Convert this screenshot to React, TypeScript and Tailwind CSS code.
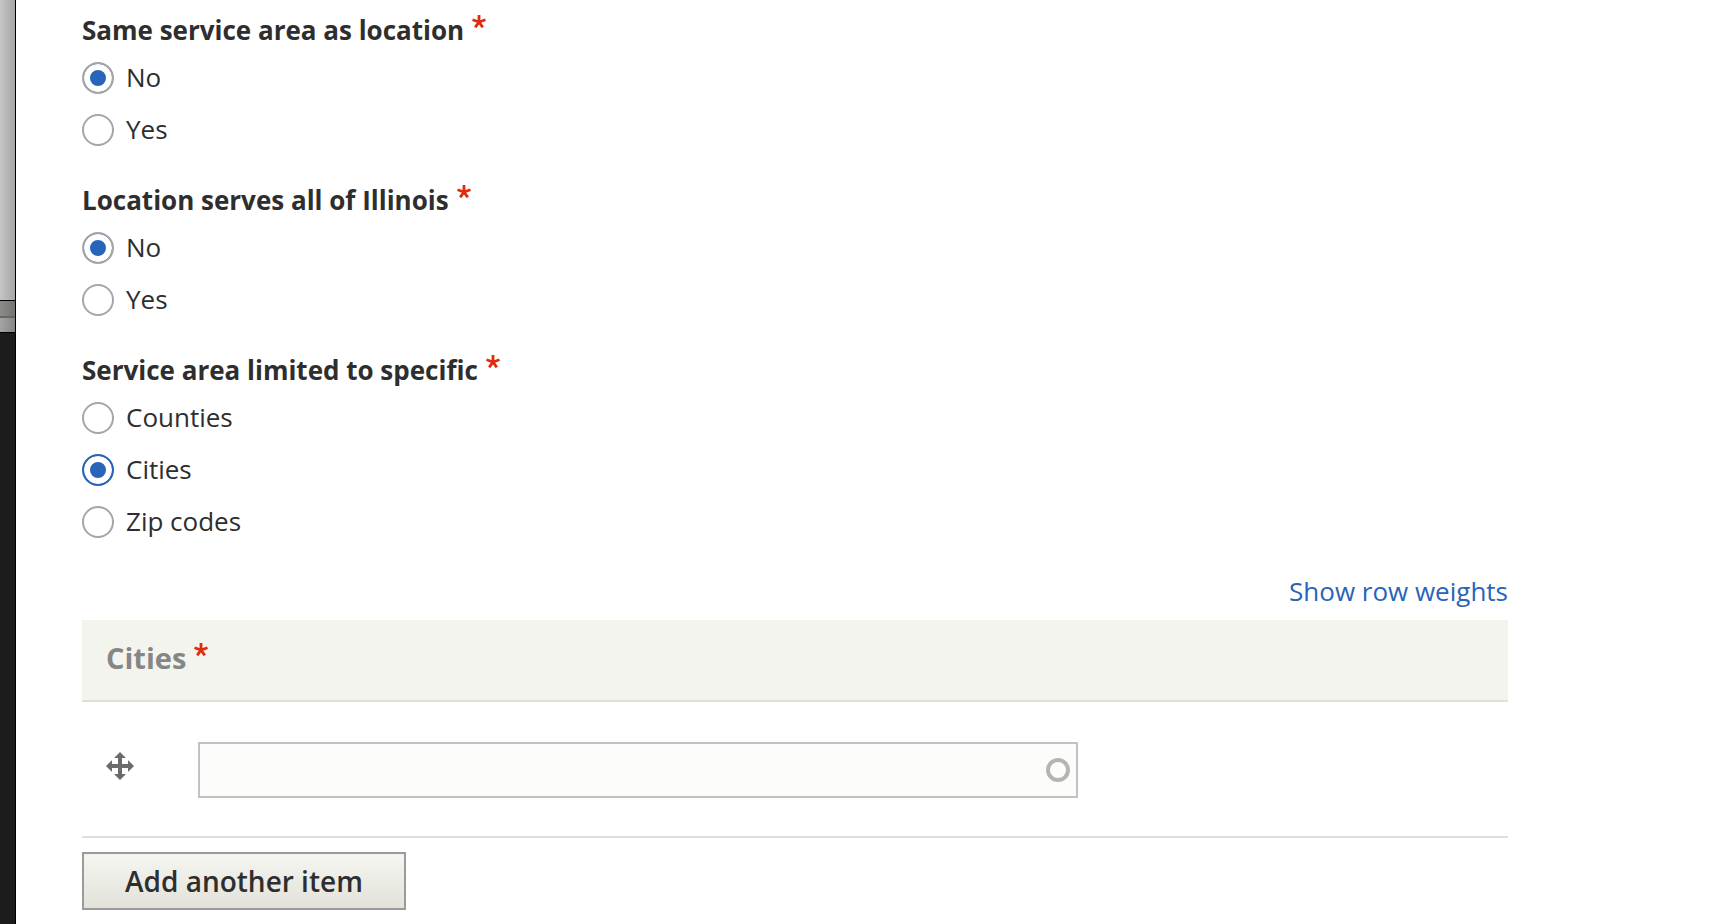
import { useState } from 'react';

interface RadioOption {
  value: string;
  label: string;
}

interface RadioGroupProps {
  name: string;
  legend: string;
  options: RadioOption[];
  value: string;
  active?: boolean;
  onChange: (value: string) => void;
}

const yesNo: RadioOption[] = [
  { value: 'no', label: 'No' },
  { value: 'yes', label: 'Yes' },
];

const areaTypes: RadioOption[] = [
  { value: 'counties', label: 'Counties' },
  { value: 'cities', label: 'Cities' },
  { value: 'zip', label: 'Zip codes' },
];

function RequiredMark() {
  return (
    <svg viewBox="0 0 14 13" className="ml-2 inline-block h-[13px] w-[14px] -translate-y-3" aria-hidden="true">
      <path
        d="M7 7V0M7 7L.5 4.700M7 7l6.500-2.300M7 7l-3.800 5.400M7 7l3.800 5.400"
        stroke="#e02b0c"
        strokeWidth="2.8"
        fill="none"
      />
    </svg>
  );
}

function RadioGroup({ name, legend, options, value, active, onChange }: RadioGroupProps) {
  return (
    <fieldset>
      <legend className="pb-0.5 text-[26px] leading-10 font-bold">
        {legend}
        <RequiredMark />
      </legend>
      {options.map((option) => (
        <div key={option.value} className="flex h-[52px] items-center gap-3">
          <input
            type="radio"
            id={`${name}-${option.value}`}
            name={name}
            checked={value === option.value}
            onChange={() => onChange(option.value)}
            className={`h-8 w-8 shrink-0 appearance-none rounded-full border-2 bg-white checked:bg-[#2864b8] checked:shadow-[inset_0_0_0_6px_#fff] ${
              active && value === option.value ? 'border-[#2864b8]' : 'border-[#a6a6a6]'
            }`}
          />
          <label htmlFor={`${name}-${option.value}`} className="pb-0.5 text-[26px] leading-8">
            {option.label}
          </label>
        </div>
      ))}
    </fieldset>
  );
}

export default function App() {
  const [sameArea, setSameArea] = useState('no');
  const [allIllinois, setAllIllinois] = useState('no');
  const [areaType, setAreaType] = useState('cities');
  const [rows, setRows] = useState<string[]>(['']);

  const updateRow = (index: number, text: string) => {
    setRows((prev) => prev.map((row, i) => (i === index ? text : row)));
  };

  return (
    <div className="flex min-h-screen bg-white font-['Open_Sans',sans-serif] text-[#2e2e2e]">
      {/* edge of the window behind */}
      <div className="flex w-4 shrink-0 flex-col border-r border-black bg-[#1c1c1c]">
        <div className="h-[300px] bg-linear-to-r from-[#c6c6c6] to-[#a6a6a6]" />
        <div className="h-px bg-black" />
        <div className="h-[15px] bg-linear-to-r from-[#8c8c8a] to-[#747472]" />
        <div className="h-0.5 bg-[#666664]" />
        <div className="h-3.5 bg-linear-to-r from-[#a4a4a4] to-[#878787]" />
        <div className="h-px bg-black" />
      </div>

      <main className="min-w-0 flex-1 pt-2.5 pr-[204px] pb-3 pl-[66px]">
        <div className="flex flex-col gap-6">
          <RadioGroup
            name="same-area"
            legend="Same service area as location"
            options={yesNo}
            value={sameArea}
            onChange={setSameArea}
          />
          <RadioGroup
            name="all-illinois"
            legend="Location serves all of Illinois"
            options={yesNo}
            value={allIllinois}
            onChange={setAllIllinois}
          />
          <RadioGroup
            name="area-type"
            legend="Service area limited to specific"
            options={areaTypes}
            value={areaType}
            active
            onChange={setAreaType}
          />
        </div>

        <div className="mt-6 flex h-12 justify-end">
          <a href="#weights" className="text-[26px] leading-[38px] text-[#2864b8]">
            Show row weights
          </a>
        </div>

        <table className="w-full border-separate border-spacing-0">
          <thead>
            <tr>
              <th
                colSpan={2}
                className="h-[82px] border-b-2 border-[#e0e0d8] bg-[#f3f4ee] pb-1 pl-6 text-left text-[29px] leading-10 font-bold text-[#868686]"
              >
                Cities
                <RequiredMark />
              </th>
            </tr>
          </thead>
          <tbody>
            {rows.map((row, index) => (
              <tr key={index} className="align-top">
                <td className="w-[116px] border-b-2 border-[#e0e0d8] pt-[50px] pl-6">
                  <button type="button" aria-label="Drag to re-order" className="block cursor-move">
                    <svg viewBox="0 0 28 28" className="h-7 w-7" fill="#6b6b6b">
                      <path d="M14 0l5.500 5.500V6H16v6h6V8.500h.5L28 14l-5.500 5.500H22V16h-6v6h3.500v.5L14 28l-5.500-5.500V22H12v-6H6v3.500h-.5L0 14l5.500-5.500H6V12h6V6H8.500v-.5z" />
                    </svg>
                  </button>
                </td>
                <td className="border-b-2 border-[#e0e0d8] pt-10 pb-[38px]">
                  <div className="relative w-full max-w-[880px]">
                    <input
                      type="text"
                      aria-label="City"
                      value={row}
                      onChange={(e) => updateRow(index, e.target.value)}
                      className="block h-14 w-full border-2 border-[#c2c2c2] bg-[#fcfcfa] pr-12 pl-4 text-[26px]"
                    />
                    <svg viewBox="0 0 24 24" className="absolute top-4 right-2 h-6 w-6" aria-hidden="true">
                      <circle cx="12" cy="12" r="10" fill="none" stroke="#b4b4b4" strokeWidth="4" />
                    </svg>
                  </div>
                </td>
              </tr>
            ))}
          </tbody>
        </table>

        <button
          type="button"
          onClick={() => setRows((prev) => [...prev, ''])}
          className="mt-3.5 h-[58px] border-2 border-[#9a9a9a] bg-linear-to-b from-[#f5f6f1] to-[#e2e2d9] px-[41px] text-[28px] leading-8 font-semibold"
        >
          Add another item
        </button>
      </main>
    </div>
  );
}
